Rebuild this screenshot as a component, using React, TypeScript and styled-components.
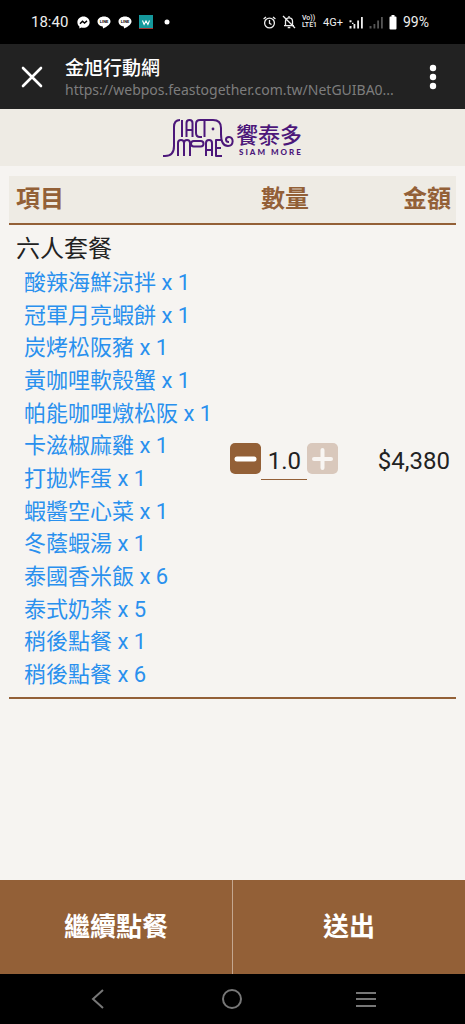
import React, { useState } from "react";
import styled, { createGlobalStyle } from "styled-components";

const brown = "#936037";

const GlobalStyle = createGlobalStyle`
  * { box-sizing: border-box; }
  body {
    margin: 0;
    background: #f6f4f1;
    color: #222;
    font-family: Roboto, "Noto Sans CJK TC", sans-serif;
  }
  button { border: 0; padding: 0; background: none; color: inherit; font: inherit; cursor: pointer; }
  svg { display: block; flex: none; }
`;

const Page = styled.div`
  min-height: 100vh;
  display: flex;
  flex-direction: column;
`;

const StatusBar = styled.div`
  display: flex;
  align-items: center;
  justify-content: space-between;
  height: 44px;
  padding: 0 36px 0 31px;
  background: #000;
  color: #eee;
  font-size: 14px;
`;

const StatusGroup = styled.div<{ $gap: number }>`
  display: flex;
  align-items: center;
  gap: ${(p) => p.$gap}px;
`;

const Clock = styled.span`
  font-size: 15px;
  margin-right: 2px;
`;

const Network = styled.span`
  font-size: 11px;
`;

const Volte = styled.span`
  display: flex;
  flex-direction: column;
  font-size: 7px;
  font-weight: 500;
  line-height: 7px;
`;

const BrowserBar = styled.header`
  display: flex;
  align-items: center;
  height: 65px;
  padding: 0 16px;
  background: #222;
  color: #fff;
`;

const IconButton = styled.button`
  display: flex;
  align-items: center;
  justify-content: center;
  width: 32px;
  height: 32px;
  flex: none;
`;

const PageInfo = styled.div`
  flex: 1;
  min-width: 0;
  padding-left: 17px;
`;

const PageTitle = styled.div`
  font: 500 19px/26px "Noto Sans CJK TC", sans-serif;
`;

const PageUrl = styled.div`
  color: #7d7d7d;
  font: 14px/20px "Noto Sans", sans-serif;
  white-space: nowrap;
`;

const BrandBar = styled.div`
  display: flex;
  justify-content: center;
  align-items: center;
  height: 57px;
  background: #eeebe4;
`;

const Main = styled.main`
  flex: 1;
  padding: 10px 9px;
`;

const OrderTable = styled.table`
  width: 100%;
  border-collapse: collapse;
  table-layout: fixed;
`;

const HeadCell = styled.th<{ $align: string; $width: string }>`
  width: ${(p) => p.$width};
  height: 48px;
  padding: 0 5px 2px 7px;
  background: #eeebe4;
  border-bottom: 2px solid ${brown};
  color: ${brown};
  font-size: 24px;
  line-height: 36px;
  font-weight: 700;
  text-align: ${(p) => p.$align};
`;

const Cell = styled.td`
  padding: 6px 6px 6px 7px;
  border-bottom: 2px solid ${brown};
  font-size: 24px;
  line-height: 36px;
`;

const DishList = styled.ul`
  display: flex;
  flex-direction: column;
  justify-content: space-between;
  min-height: 424px;
  margin: 0;
  padding: 0 0 0 8px;
  list-style: none;
  color: #2990ee;
  font-size: 22px;
  line-height: 32px;
  white-space: nowrap;
`;

const Stepper = styled.div`
  display: flex;
  justify-content: center;
`;

const StepButton = styled.button`
  display: flex;
  align-items: center;
  justify-content: center;
  width: 31px;
  height: 31px;
  border-radius: 5px;
  background: ${brown};
  &:disabled { background: #d9c8bc; cursor: default; }
`;

const Quantity = styled.input`
  width: 46px;
  height: 37px;
  padding: 0;
  border: 0;
  border-bottom: 1px solid ${brown};
  border-radius: 0;
  background: none;
  color: #222;
  font: 24px/36px Roboto, sans-serif;
  text-align: center;
`;

const Price = styled(Cell)`
  text-align: right;
`;

const Actions = styled.div`
  display: flex;
  height: 94px;
  background: ${brown};
`;

const ActionButton = styled.button`
  flex: 1;
  padding-bottom: 5px;
  color: #fff;
  font-size: 26px;
  font-weight: 700;
  & + & { border-left: 1px solid #c4a78f; }
`;

const SystemNav = styled.nav`
  display: flex;
  align-items: center;
  justify-content: space-between;
  height: 50px;
  padding: 0 83px 0 82px;
  background: #000;
`;

const Brand = styled.svg`
  width: 146px;
  height: 48px;
`;

const dishes: [string, number][] = [
  ["酸辣海鮮涼拌", 1],
  ["冠軍月亮蝦餅", 1],
  ["炭烤松阪豬", 1],
  ["黃咖哩軟殼蟹", 1],
  ["帕能咖哩燉松阪", 1],
  ["卡滋椒麻雞", 1],
  ["打拋炸蛋", 1],
  ["蝦醬空心菜", 1],
  ["冬蔭蝦湯", 1],
  ["泰國香米飯", 6],
  ["泰式奶茶", 5],
  ["稍後點餐", 1],
  ["稍後點餐", 6],
];

const Messenger = () => (
  <svg width="13" height="13" viewBox="0 0 13 13">
    <path d="M6.5 .5C3 .5.4 3 .4 6.3c0 1.8.8 3.2 2 4.2v2l1.9-1c.7.2 1.4.3 2.2.3 3.5 0 6.1-2.4 6.1-5.6S10 .5 6.5.5z" fill="#fff" />
    <path d="M3 7.8l2.5-2.6 2 1.8L10 4.9" stroke="#000" strokeWidth="1.4" fill="none" />
  </svg>
);

const LineChat = () => (
  <svg width="14" height="13" viewBox="0 0 14 13">
    <path d="M7 .4C3.3 .4.5 2.6.5 5.6c0 2.7 2.3 4.6 5.3 5l.2 2c2.5-1.2 7.5-3.6 7.5-7C13.5 2.6 10.7.4 7 .4z" fill="#fff" />
    <text x="7" y="7" fontSize="4" fontWeight="700" fontFamily="Roboto, sans-serif" textAnchor="middle" fill="#000">LINE</text>
  </svg>
);

const AppBadge = () => (
  <svg width="14" height="14" viewBox="0 0 14 14">
    <path d="M0 0h14v14H0z" fill="#15989c" />
    <path d="M0 13.5h14" stroke="#a33" />
    <path d="M3.5 5.5l1.6 4L7 6l1.9 3.5 1.6-4" stroke="#fff" strokeWidth="1.1" fill="none" />
  </svg>
);

const Alarm = () => (
  <svg width="13" height="13" viewBox="0 0 13 13" fill="none" stroke="#eee" strokeWidth="1.3">
    <circle cx="6.5" cy="7" r="4.9" />
    <path d="M6.5 4v3.3l2 1.2M.6 2.9L3 .9M12.4 2.900L10 .9" />
  </svg>
);

const Muted = () => (
  <svg width="14" height="14" viewBox="0 0 14 14" fill="none" stroke="#eee" strokeWidth="1.3">
    <path d="M3.5 10.5V6.2C3.500 4.300 5 2.800 7 2.800s3.500 1.500 3.500 3.400v4.300M2 10.700h10M7 1v2M1 1l12 12" />
    <path d="M5.700 12.500h2.600" strokeWidth="1.5" />
  </svg>
);

const Signal = ({ dim, data }: { dim?: boolean; data?: boolean }) => (
  <svg width="14" height="13" viewBox="0 0 14 13" fill={dim ? "#555" : "#eee"}>
    <path d="M.5 10h2v2.500h-2zM4.500 8h1.800v4.500H4.500zM8.200 4.500H10v8H8.200zM12 1h1.800v11.500H12z" />
    {data && <path d="M.5 4.200h2v2h-2zM3 6.700h1.500V8H3z" />}
  </svg>
);

const Battery = () => (
  <svg width="8" height="15" viewBox="0 0 8 15" fill="#fff">
    <path d="M2.500 0h3v1.500h1q1 0 1 1V13.500q0 1-1 1h-5q-1 0-1-1V2.500q0-1 1-1h1z" />
  </svg>
);

const BrandLogo = () => (
  <Brand viewBox="0 0 146 48" role="img" aria-label="饗泰多 SIAM MORE">
    <g fill="none" stroke="#4c177a" strokeWidth="2" strokeLinejoin="round">
      <path d="M3 42h2c7 0 9-4 9-10V13c0-5 2-7 6-7" />
      <path d="M22 6v17M26.500 23V9q0-3 3-3t3 3v14M26.500 16h6" />
      <path d="M42 23h-2q-4 0-4-4V10q0-4 4-4h13c5 0 8 3 8 8v7M44.500 6v17" />
      <path d="M18 42V29q0-3 3-3t3 3v13M24 42V29q0-3 3-3t3 3v13" />
      <rect x="31" y="27" width="12.500" height="5.500" rx="2.700" />
      <path d="M46 42V29q0-3 3-3t3 3v13M46 36h6M61 26h-5v16h6M56 34h5" />
      <path d="M61 20c0 8 3 12 7 12 6 0 6-9 1-9-4 0-4 5 0 5" />
    </g>
    <circle cx="53" cy="15" r="1.400" fill="#4c177a" />
    <g fill="#4c177a">
      <text x="76" y="29" fontSize="22" fontWeight="500" fontFamily="'Noto Sans CJK TC', sans-serif">饗泰多</text>
      <text x="79" y="41" fontSize="8" fontWeight="900" letterSpacing="2" fontFamily="Lato, sans-serif">SIAM MORE</text>
    </g>
  </Brand>
);

export default function App() {
  const [quantity, setQuantity] = useState("1.0");
  return (
    <Page>
      <GlobalStyle />
      <StatusBar>
        <StatusGroup $gap={7}>
          <Clock>18:40</Clock>
          <Messenger />
          <LineChat />
          <LineChat />
          <AppBadge />
          <svg width="14" height="6" viewBox="0 0 14 6"><circle cx="7" cy="3" r="2.5" fill="#fff" /></svg>
        </StatusGroup>
        <StatusGroup $gap={6}>
          <Alarm />
          <Muted />
          <Volte><span>Vo))</span><span>LTE1</span></Volte>
          <Network>4G+</Network>
          <Signal data />
          <Signal dim />
          <Battery />
          <span>99%</span>
        </StatusGroup>
      </StatusBar>

      <BrowserBar>
        <IconButton aria-label="關閉">
          <svg width="22" height="22" viewBox="0 0 22 22" stroke="#fff" strokeWidth="2.6" strokeLinecap="round">
            <path d="M2 2l18 18M20 2L2 20" />
          </svg>
        </IconButton>
        <PageInfo>
          <PageTitle>金旭行動網</PageTitle>
          <PageUrl>https://webpos.feastogether.com.tw/NetGUIBA0...</PageUrl>
        </PageInfo>
        <IconButton aria-label="選單">
          <svg width="8" height="26" viewBox="0 0 8 26" fill="#fff">
            <circle cx="4" cy="4" r="3.2" />
            <circle cx="4" cy="13" r="3.2" />
            <circle cx="4" cy="22" r="3.2" />
          </svg>
        </IconButton>
      </BrowserBar>

      <BrandBar><BrandLogo /></BrandBar>

      <Main>
        <OrderTable>
          <thead>
            <tr>
              <HeadCell $align="left" $width="47%">項目</HeadCell>
              <HeadCell $align="center" $width="29%">數量</HeadCell>
              <HeadCell $align="right" $width="24%">金額</HeadCell>
            </tr>
          </thead>
          <tbody>
            <tr>
              <Cell>
                六人套餐
                <DishList>
                  {dishes.map(([name, count], i) => (
                    <li key={i}>{name} x {count}</li>
                  ))}
                </DishList>
              </Cell>
              <Cell>
                <Stepper>
                  <StepButton aria-label="減少">
                    <svg width="23" height="23" viewBox="0 0 23 23" stroke="#fff" strokeWidth="5" strokeLinecap="round"><path d="M3 12h17" /></svg>
                  </StepButton>
                  <Quantity aria-label="數量" value={quantity} onChange={(e) => setQuantity(e.target.value)} />
                  <StepButton aria-label="增加" disabled>
                    <svg width="23" height="23" viewBox="0 0 23 23" stroke="#f8f5f2" strokeWidth="4" strokeLinecap="round"><path d="M3 12h17M11.500 3v18" /></svg>
                  </StepButton>
                </Stepper>
              </Cell>
              <Price>$4,380</Price>
            </tr>
          </tbody>
        </OrderTable>
      </Main>

      <Actions>
        <ActionButton>繼續點餐</ActionButton>
        <ActionButton>送出</ActionButton>
      </Actions>

      <SystemNav>
        <IconButton aria-label="返回">
          <svg width="14" height="20" viewBox="0 0 14 20" fill="none" stroke="#777" strokeWidth="2"><path d="M12 1L2 10l10 9" /></svg>
        </IconButton>
        <IconButton aria-label="首頁">
          <svg width="22" height="22" viewBox="0 0 22 22" fill="none" stroke="#777" strokeWidth="2"><circle cx="11" cy="11" r="9" /></svg>
        </IconButton>
        <IconButton aria-label="最近使用">
          <svg width="22" height="18" viewBox="0 0 22 18" stroke="#777" strokeWidth="2"><path d="M1 3h20M1 9h20M1 16h20" /></svg>
        </IconButton>
      </SystemNav>
    </Page>
  );
}
